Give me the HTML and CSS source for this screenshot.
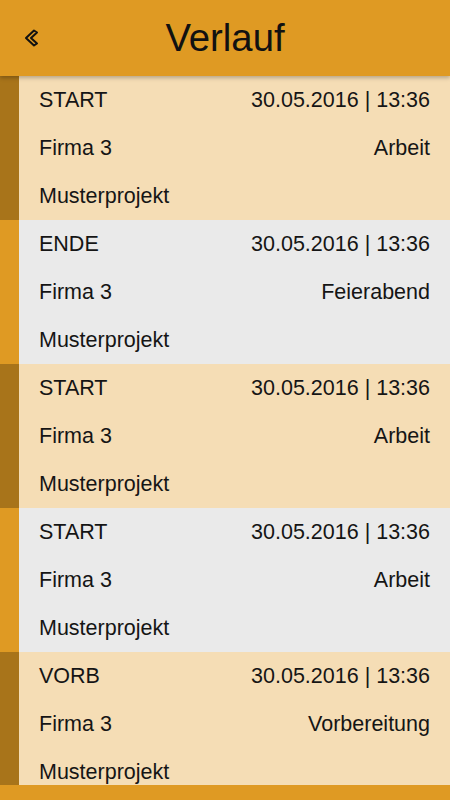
FILE: index.html
```html
<!DOCTYPE html>
<html lang="de">
<head>
<meta charset="utf-8">
<title>Verlauf</title>
<link rel="stylesheet" href="styles.css">
</head>
<body>
<div class="app">
  <header class="topbar">
    <button class="back" aria-label="Zurück">
      <svg width="20" height="20" viewBox="0 0 20 20"><path d="M12 1.5 L4 9 L12 16.5 L15 14.5 L9 9 L15 3.5 Z" fill="none" stroke="#111" stroke-width="2" stroke-linejoin="round"/></svg>
    </button>
    <h1 class="title">Verlauf</h1>
  </header>
  <main class="list">
    <div class="entry tan">
      <div class="bar"></div>
      <div class="content">
        <div class="line"><span>START</span><span>30.05.2016 | 13:36</span></div>
        <div class="line"><span>Firma 3</span><span>Arbeit</span></div>
        <div class="line"><span>Musterprojekt</span></div>
      </div>
    </div>
    <div class="entry gray">
      <div class="bar"></div>
      <div class="content">
        <div class="line"><span>ENDE</span><span>30.05.2016 | 13:36</span></div>
        <div class="line"><span>Firma 3</span><span>Feierabend</span></div>
        <div class="line"><span>Musterprojekt</span></div>
      </div>
    </div>
    <div class="entry tan">
      <div class="bar"></div>
      <div class="content">
        <div class="line"><span>START</span><span>30.05.2016 | 13:36</span></div>
        <div class="line"><span>Firma 3</span><span>Arbeit</span></div>
        <div class="line"><span>Musterprojekt</span></div>
      </div>
    </div>
    <div class="entry gray">
      <div class="bar"></div>
      <div class="content">
        <div class="line"><span>START</span><span>30.05.2016 | 13:36</span></div>
        <div class="line"><span>Firma 3</span><span>Arbeit</span></div>
        <div class="line"><span>Musterprojekt</span></div>
      </div>
    </div>
    <div class="entry tan">
      <div class="bar"></div>
      <div class="content">
        <div class="line"><span>VORB</span><span>30.05.2016 | 13:36</span></div>
        <div class="line"><span>Firma 3</span><span>Vorbereitung</span></div>
        <div class="line"><span>Musterprojekt</span></div>
      </div>
    </div>
  </main>
  <footer class="bottombar"></footer>
</div>
</body>
</html>
```
FILE: styles.css
```css
* { box-sizing: border-box; }
html, body { margin: 0; padding: 0; }
body {
  font-family: "Liberation Sans", Arial, sans-serif;
  color: #151515;
  background: #eaeaea;
}
.app {
  width: 450px;
  height: 800px;
  display: flex;
  flex-direction: column;
  overflow: hidden;
}
.topbar {
  height: 76px;
  flex: 0 0 76px;
  background: #df9a23;
  display: grid;
  grid-template-columns: 60px 1fr 60px;
  align-items: center;
  position: relative;
  z-index: 2;
  box-shadow: 0 2px 4px rgba(0,0,0,0.25);
}
.back {
  background: none;
  border: 0;
  padding: 0;
  margin-left: 22px;
  margin-top: 2px;
  width: 20px;
  height: 20px;
  display: flex;
}
.title {
  grid-column: 2;
  margin: 0;
  text-align: center;
  font-weight: normal;
  font-size: 38.3px;
  color: #111;
  line-height: 1;
}
.list {
  flex: 1 1 auto;
  overflow: hidden;
  display: flex;
  flex-direction: column;
}
.entry {
  flex: 0 0 144px;
  display: flex;
}
.bar { width: 19px; flex: 0 0 19px; }
.tan { background: #f5ddb5; }
.tan .bar { background: #a8741a; }
.gray { background: #eaeaea; }
.gray .bar { background: #df9a23; }
.content {
  flex: 1;
  padding: 0 20px;
  display: flex;
  flex-direction: column;
}
.line {
  height: 48px;
  display: flex;
  justify-content: space-between;
  align-items: center;
  font-size: 21.5px;
}
.bottombar {
  flex: 0 0 15px;
  background: #df9a23;
}
```
